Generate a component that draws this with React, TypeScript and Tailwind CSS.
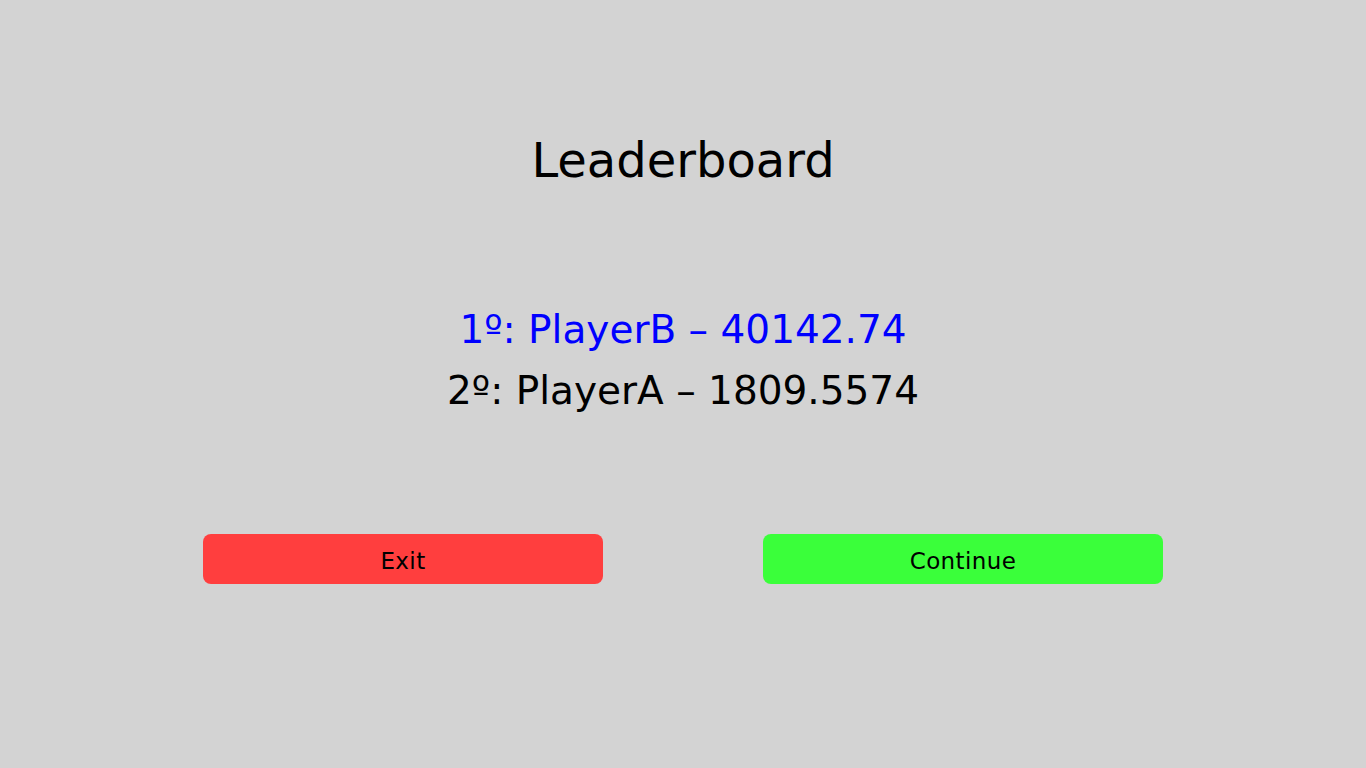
export default function App() {
  return (
    <div
      className="min-h-screen w-full bg-[#d3d3d3] flex flex-col items-center pt-[136px]"
      style={{ fontFamily: '"DejaVu Sans", "Liberation Sans", sans-serif' }}
    >
      <h1 className="text-[48px] leading-none text-black">Leaderboard</h1>

      <div className="mt-[115px] flex flex-col items-center">
        <p className="text-[39px] leading-[61px] text-[#0000ff]">1º: PlayerB – 40142.74</p>
        <p className="text-[39px] leading-[61px] text-black">2º: PlayerA – 1809.5574</p>
      </div>

      <div className="mt-[113px] flex gap-[160px]">
        <button className="w-[400px] h-[50px] pt-[5px] rounded-lg bg-[#ff3e3e] text-[23px] tracking-[0.4px] text-black flex items-center justify-center">
          Exit
        </button>
        <button className="w-[400px] h-[50px] pt-[5px] rounded-lg bg-[#3aff3a] text-[23px] tracking-[0.4px] text-black flex items-center justify-center">
          Continue
        </button>
      </div>
    </div>
  );
}
